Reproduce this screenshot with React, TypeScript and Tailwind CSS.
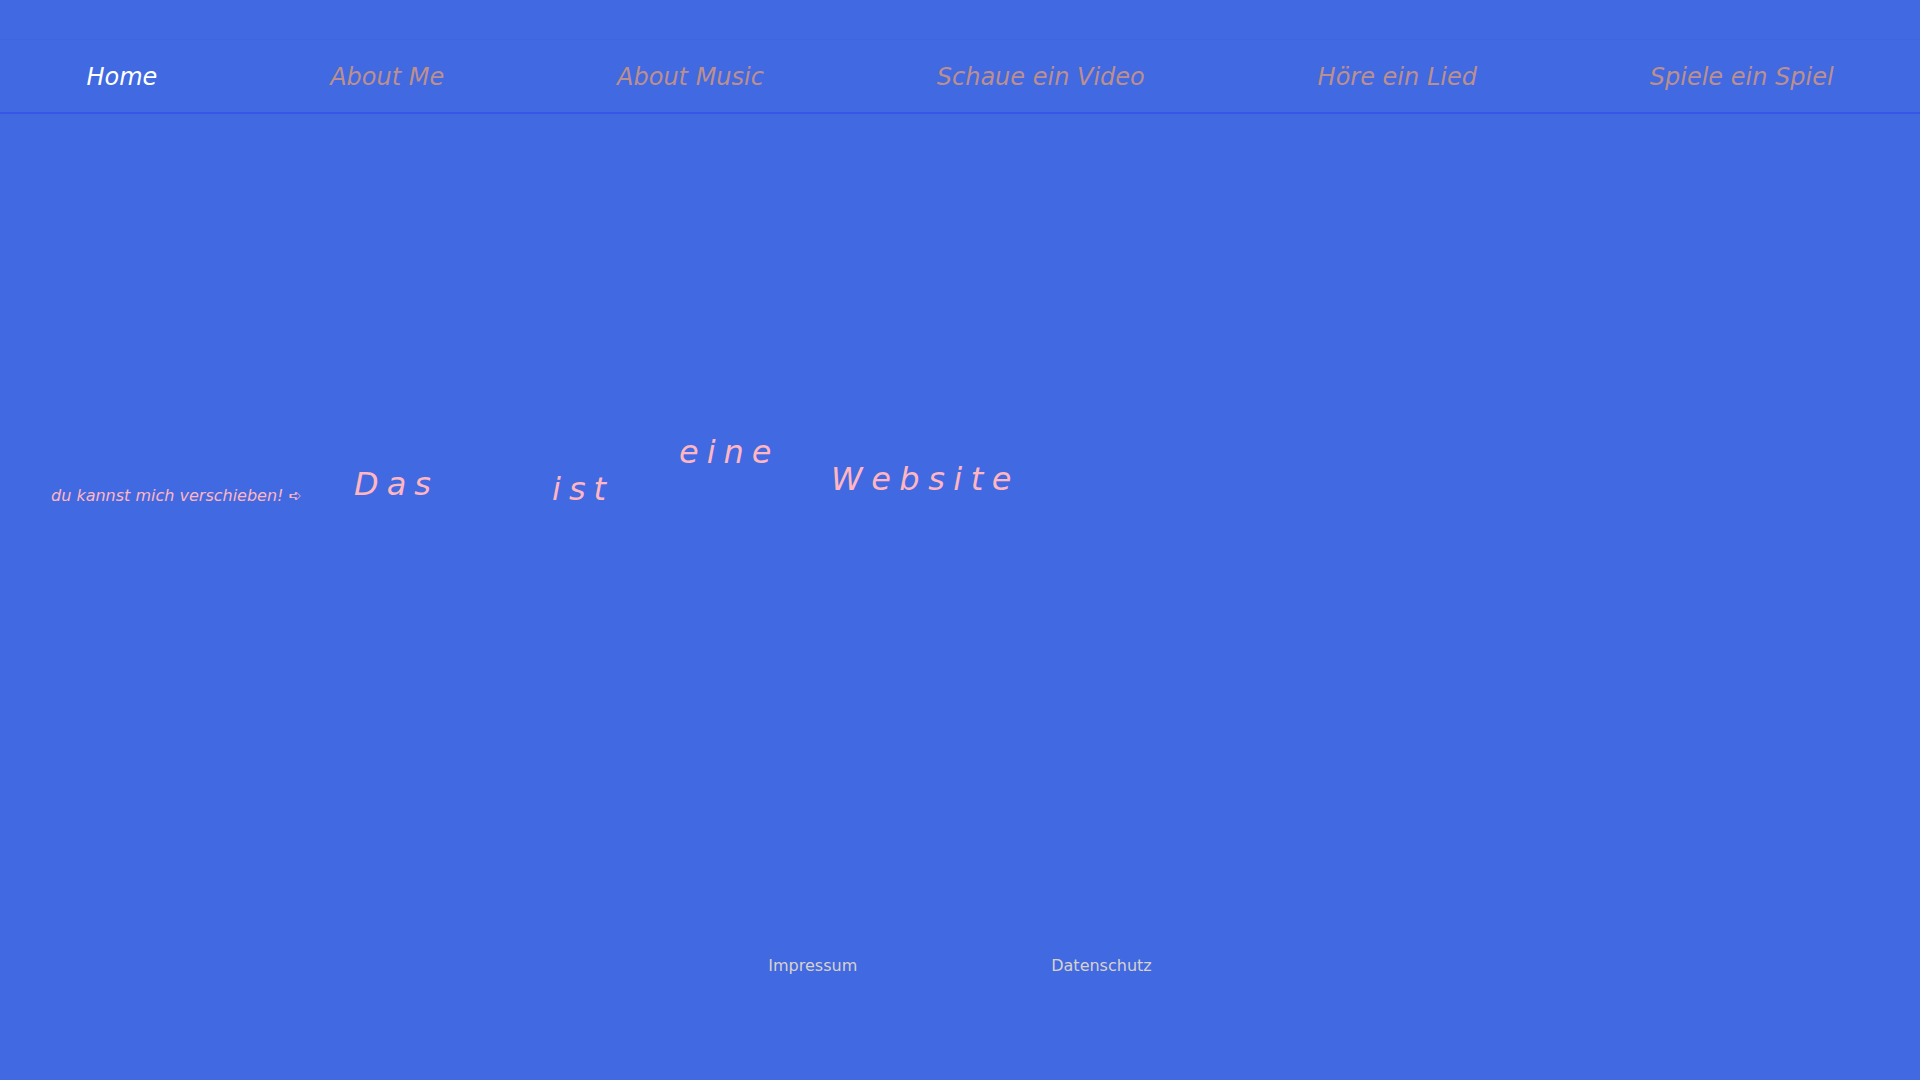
import React from "react";

const navItems = [
  { label: "Home", active: true },
  { label: "About Me" },
  { label: "About Music" },
  { label: "Schaue ein Video" },
  { label: "Höre ein Lied" },
  { label: "Spiele ein Spiel" },
];

export default function App() {
  return (
    <div
      className="min-h-screen w-full bg-[#4169e1] flex flex-col"
      style={{ fontFamily: '"DejaVu Sans", "Liberation Sans", sans-serif' }}
    >
      <div className="h-[39px]" />
      <nav className="h-[75px] pt-[2px] border-t border-t-[#3f66de] border-b-2 border-b-[#3656e8] flex items-center justify-around">
        {navItems.map((item) => (
          <a
            key={item.label}
            href="#"
            className={`italic text-[24px] leading-none whitespace-nowrap ${
              item.active ? "text-white" : "text-[#bc8f8f]"
            }`}
          >
            {item.label}
          </a>
        ))}
      </nav>

      <main className="h-[844px] pt-[322px]">
        <div className="flex items-start pl-[51px] text-[#ffb6c1] italic">
          <div className="w-[303px] mt-[52px] text-[16px] leading-none whitespace-nowrap">
            du kannst mich verschieben! ➪
          </div>
          <div className="w-[198px] mt-[32px] text-[32px] leading-none tracking-[8px]">
            Das
          </div>
          <div className="w-[127px] mt-[37px] text-[32px] leading-none tracking-[8px]">
            ist
          </div>
          <div className="w-[152px] mt-0 text-[32px] leading-none tracking-[8px]">
            eine
          </div>
          <div className="mt-[27px] text-[32px] leading-none tracking-[8.5px]">
            Website
          </div>
        </div>
      </main>

      <footer className="flex justify-center gap-[194px] text-[16px] leading-none text-[#d8d2cc]">
        <a href="#">Impressum</a>
        <a href="#">Datenschutz</a>
      </footer>
    </div>
  );
}
